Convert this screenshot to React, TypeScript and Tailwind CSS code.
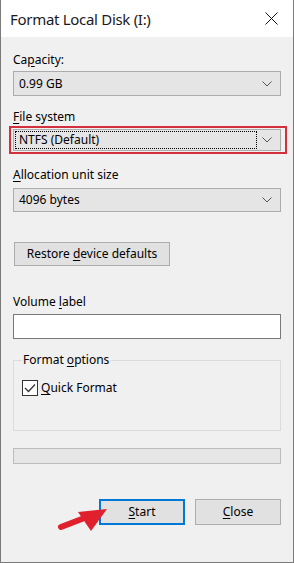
import type { ReactNode } from "react";

function Chevron() {
  return (
    <svg width="10" height="6" viewBox="0 0 10 6" className="shrink-0">
      <path d="M0.5 0.5 L5 5 L9.5 0.5" fill="none" stroke="#555" strokeWidth="1" />
    </svg>
  );
}

function Dropdown({ value, focused = false, h = "h-[25px]" }: { value: string; focused?: boolean; h?: string }) {
  return (
    <div className={`flex ${h} w-[268px] items-center border border-[#acacac] bg-[#e5e5e5] pr-[8px]`}>
      <div className="flex h-full flex-1 items-center p-[1px]">
        <div
          className={`flex h-full w-[242px] items-center pl-[3px] ${focused ? "border border-dotted border-black" : "border border-transparent"}`}
        >
          {value}
        </div>
      </div>
      <Chevron />
    </div>
  );
}

function Key({ children }: { children: ReactNode }) {
  return <span className="underline underline-offset-[2px]">{children}</span>;
}

export default function App() {
  return (
    <div className="relative h-[563px] w-[294px] overflow-hidden border-x border-b border-[#7a7a7a] bg-[#f0f0f0] text-[12px] leading-[16px] text-black [font-family:'Noto_Sans',sans-serif]">
      {/* title bar */}
      <div className="flex h-[37px] items-center justify-between bg-white pl-[9px] pr-[15px]">
        <span className="text-[15px] tracking-[-0.3px] text-[#1a1a1a]">Format Local Disk (I:)</span>
        <svg width="13" height="13" viewBox="0 0 13 13">
          <path d="M0.5 0.5 L12.5 12.5 M12.5 0.5 L0.5 12.5" stroke="#111" strokeWidth="1" />
        </svg>
      </div>

      <div className="flex flex-col px-[12px]">
        <div className="mt-[15px]">
          Ca<Key>p</Key>acity:
        </div>
        <div className="mt-[3px]">
          <Dropdown value="0.99 GB" />
        </div>

        <div className="mt-[13px]">
          <Key>F</Key>ile system
        </div>
        <div className="-ml-[4px] mt-[1px] w-[278px] border-2 border-[#d32f3c] px-[2px] py-[1px]">
          <Dropdown value="NTFS (Default)" focused h="h-[22px]" />
        </div>

        <div className="mt-[13px]">
          <Key>A</Key>llocation unit size
        </div>
        <div className="mt-[5px]">
          <Dropdown value="4096 bytes" h="h-[24px]" />
        </div>

        <button className="ml-[1px] mt-[30px] flex h-[24px] w-[156px] items-center justify-center border border-[#adadad] bg-[#e1e1e1]">
          <span>
            Restore <Key>d</Key>evice defaults
          </span>
        </button>

        <div className="mt-[28px]">
          Volume <Key>l</Key>abel
        </div>
        <div className="mt-[4px] h-[25px] w-[268px] border border-[#7a7a7a] bg-white" />

        <fieldset className="mt-[13px] h-[79px] w-[268px] border border-[#dcdcdc] px-[8px]">
          <legend className="px-[1px]">
            Format <Key>o</Key>ptions
          </legend>
          <label className="mt-[12px] flex items-center gap-[3px]">
            <span className="flex h-[16px] w-[16px] items-center justify-center border border-[#333] bg-white">
              <svg width="12" height="10" viewBox="0 0 12 10">
                <path d="M1 5 L4.5 8.5 L11 1.5" fill="none" stroke="#333" strokeWidth="1.3" />
              </svg>
            </span>
            <span>
              <Key>Q</Key>uick Format
            </span>
          </label>
        </fieldset>

        <div className="mt-[17px] h-[16px] w-[268px] border border-[#bcbcbc] bg-[#e6e6e6]" />

        <div className="mt-[35px] flex w-[268px] justify-end gap-[10px]">
          <button className="flex h-[26px] w-[86px] items-center justify-center border-2 border-[#0078d7] bg-[#e1e1e1]">
            <span>
              <Key>S</Key>tart
            </span>
          </button>
          <button className="flex h-[26px] w-[86px] items-center justify-center border border-[#adadad] bg-[#e1e1e1]">
            <span>
              <Key>C</Key>lose
            </span>
          </button>
        </div>
      </div>

      {/* red pointer arrow */}
      <svg className="pointer-events-none absolute left-0 top-0" width="294" height="563" viewBox="0 0 294 563">
        <line x1="60" y1="527" x2="86" y2="517" stroke="#e0202c" strokeWidth="6" strokeLinecap="round" />
        <polygon points="106,509 77,512 90,531" fill="#e0202c" />
      </svg>
    </div>
  );
}
